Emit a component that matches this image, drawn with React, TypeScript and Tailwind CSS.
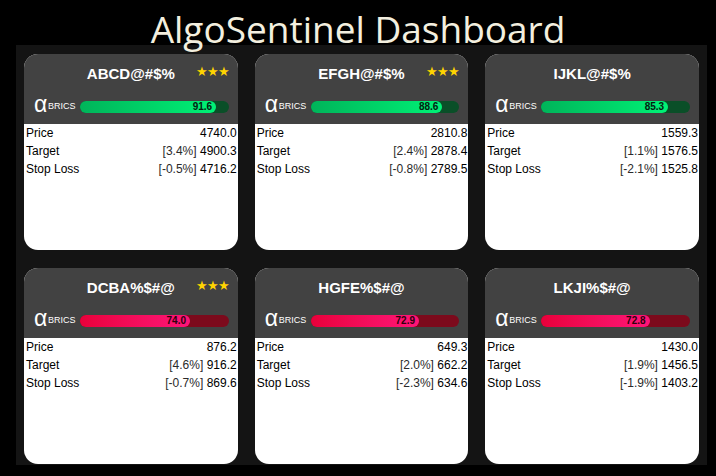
import React from 'react';

type Card = {
  name: string;
  stars: boolean;
  score: number;
  up: boolean;
  price: string;
  target: [string, string];
  stop: [string, string];
};

const cards: Card[] = [
  { name: 'ABCD@#$%', stars: true, score: 91.6, up: true, price: '4740.0', target: ['[3.4%]', '4900.3'], stop: ['[-0.5%]', '4716.2'] },
  { name: 'EFGH@#$%', stars: true, score: 88.6, up: true, price: '2810.8', target: ['[2.4%]', '2878.4'], stop: ['[-0.8%]', '2789.5'] },
  { name: 'IJKL@#$%', stars: false, score: 85.3, up: true, price: '1559.3', target: ['[1.1%]', '1576.5'], stop: ['[-2.1%]', '1525.8'] },
  { name: 'DCBA%$#@', stars: true, score: 74.0, up: false, price: '876.2', target: ['[4.6%]', '916.2'], stop: ['[-0.7%]', '869.6'] },
  { name: 'HGFE%$#@', stars: false, score: 72.9, up: false, price: '649.3', target: ['[2.0%]', '662.2'], stop: ['[-2.3%]', '634.6'] },
  { name: 'LKJI%$#@', stars: false, score: 72.8, up: false, price: '1430.0', target: ['[1.9%]', '1456.5'], stop: ['[-1.9%]', '1403.2'] },
];

function ScoreBar({ score, up }: { score: number; up: boolean }) {
  return (
    <div className={`flex-1 h-[12px] rounded-full ${up ? 'bg-[#0a4f28]' : 'bg-[#7c0a1c]'}`}>
      <div
        className={`h-full rounded-full flex items-center justify-end pr-[4px] ${
          up ? 'bg-gradient-to-r from-[#00b45a] to-[#00f276] text-[#04200f]' : 'bg-gradient-to-r from-[#e8003a] to-[#ff1478] text-[#2e000c]'
        }`}
        style={{ width: `${score}%` }}
      >
        <span className="text-[10px] font-bold leading-none">{score.toFixed(1)}</span>
      </div>
    </div>
  );
}

function StockCard({ c }: { c: Card }) {
  return (
    <div className="h-[196px] rounded-[14px] bg-white overflow-hidden flex flex-col">
      <div className="h-[70px] bg-[#424242] relative shrink-0">
        <div className="pt-[11px] text-center text-white font-bold text-[15px] leading-[18px]">{c.name}</div>
        {c.stars && (
          <div className="absolute right-[9px] top-[9px] text-[#ffd400] text-[13px] leading-[18px] tracking-[-1px]">★★★</div>
        )}
        <div className="flex items-center mt-[14px] pl-[10px] pr-[9px]">
          <span className="text-white text-[23px] leading-none w-[14px] -mt-[4px]">α</span>
          <span className="text-white text-[9px] leading-none w-[32px]">BRICS</span>
          <ScoreBar score={c.score} up={c.up} />
        </div>
      </div>
      <div className="text-[12px] leading-[18px] text-black pl-[2px] pr-[1px]">
        <div className="flex justify-between">
          <span>Price</span>
          <span>{c.price}</span>
        </div>
        <div className="flex justify-between">
          <span>Target</span>
          <span>
            <span className="text-[#2a2a2a]">{c.target[0]}</span> {c.target[1]}
          </span>
        </div>
        <div className="flex justify-between">
          <span>Stop Loss</span>
          <span>
            <span className="text-[#2a2a2a]">{c.stop[0]}</span> {c.stop[1]}
          </span>
        </div>
      </div>
    </div>
  );
}

export default function App() {
  return (
    <div className="w-[716px] h-[476px] bg-black overflow-hidden" style={{ fontFamily: '"Liberation Sans", Arial, sans-serif' }}>
      {/* Title */}
      <div className="h-[45px] text-center text-[#f3efdf] text-[37px] leading-[57px] font-['Open_Sans',sans-serif]">
        AlgoSentinel Dashboard
      </div>

      {/* Panel */}
      <div className="ml-[16px] w-[691px] h-[420px] bg-[#141414] px-[8px] pt-[9px]">
        <div className="grid grid-cols-3 gap-x-[17px] gap-y-[18px]">
          {cards.map((c) => (
            <StockCard key={c.name} c={c} />
          ))}
        </div>
      </div>
    </div>
  );
}
